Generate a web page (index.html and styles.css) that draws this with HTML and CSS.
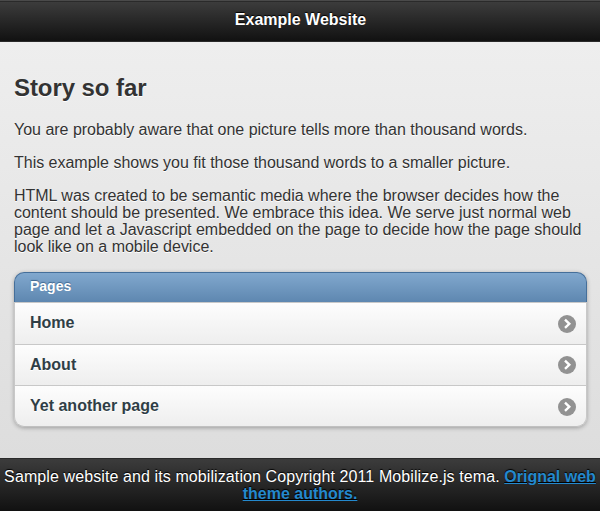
FILE: index.html
```html
<!DOCTYPE html>
<html lang="en">
<head>
<meta charset="utf-8">
<title>Example Website</title>
<link rel="stylesheet" href="styles.css">
</head>
<body>
<header class="header"><h1 class="title">Example Website</h1></header>
<main class="content">
  <h2 class="heading">Story so far</h2>
  <p class="p1">You are probably aware that one picture tells more than thousand words.</p>
  <p>This example shows you fit those thousand words to a smaller picture.</p>
  <p>HTML was created to be semantic media where the browser decides how the<br>content should be presented. We embrace this idea. We serve just normal web<br>page and let a Javascript embedded on the page to decide how the page should<br>look like on a mobile device.</p>
  <ul class="list">
    <li class="divider">Pages</li>
    <li class="item first"><a>Home</a><svg class="arrow" viewBox="0 0 18 18"><circle cx="9" cy="9" r="9"/><path d="M7 4.7 11.3 8.8 7 12.9"/></svg></li>
    <li class="item"><a>About</a><svg class="arrow" viewBox="0 0 18 18"><circle cx="9" cy="9" r="9"/><path d="M7 4.7 11.3 8.8 7 12.9"/></svg></li>
    <li class="item last"><a>Yet another page</a><svg class="arrow" viewBox="0 0 18 18"><circle cx="9" cy="9" r="9"/><path d="M7 4.7 11.3 8.8 7 12.9"/></svg></li>
  </ul>
</main>
<footer class="footer">Sample website and its mobilization Copyright 2011 Mobilize.js tema. <a class="link">Orignal web<br>theme authors.</a></footer>
</body>
</html>
```
FILE: styles.css
```css
* { box-sizing: border-box; }
body {
  margin: 0;
  height: 511px;
  overflow: hidden;
  display: flex;
  flex-direction: column;
  font: 16px/17px "Liberation Sans", Arial, sans-serif;
  color: #333;
}
.header {
  height: 42px;
  flex: none;
  border-top: 1px solid #4a4a4a;
  border-bottom: 1px solid #2a2a2a;
  background: linear-gradient(#2a2a2a 1px, #3c3c3c 1px, #111);
  color: #fff;
  text-align: center;
  text-shadow: 0 -1px 1px #000;
}
.title { margin: 9px 0 0 1px; font-size: 16px; line-height: 20px; }
.content {
  height: 416px;
  flex: none;
  padding: 30px 13px 0 14px;
  background: linear-gradient(#eee, #ddd);
  text-shadow: 0 1px 0 #fff;
}
.heading { margin: 0; font-size: 24px; line-height: 32px; letter-spacing: -.07px; }
p { margin: 0 0 16px; white-space: nowrap; letter-spacing: -.014px; }
.p1 { margin-top: 17px; }
.list {
  list-style: none;
  margin: 17px 0 0;
  padding: 0;
  height: 155px;
  border-radius: 10px;
  box-shadow: 0 1px 4px rgba(0, 0, 0, .3);
  font-weight: bold;
}
.divider {
  height: 30px;
  padding: 5px 15px 0;
  border: 1px solid #456f9a;
  border-bottom: 0;
  border-radius: 10px 10px 0 0;
  background: linear-gradient(#81a8ce, #5e87b0);
  color: #fff;
  font-size: 14px;
  text-shadow: 0 -1px 1px #3e6790;
}
.item {
  height: 41px;
  display: flex;
  align-items: center;
  justify-content: space-between;
  padding: 0 10px 0 15px;
  border: 1px solid #c8c8c8;
  border-bottom: 0;
  background: linear-gradient(#fdfdfd, #eee);
  color: #2f3e46;
}
.item a { padding-bottom: 2px; }
.first { height: 42px; }
.last { height: 42px; border-bottom: 1px solid #c0c0c0; border-radius: 0 0 10px 10px; }
.last .arrow { margin-top: 2px; }
.arrow { width: 18px; height: 18px; flex: none; }
.arrow circle { fill: #929292; }
.arrow path { fill: none; stroke: #fff; stroke-width: 2.4; }
.footer {
  height: 53px;
  flex: none;
  padding-top: 9px;
  border-top: 1px solid #2a2a2a;
  background: linear-gradient(#3c3c3c, #111);
  color: #fff;
  text-align: center;
  white-space: nowrap;
  text-shadow: 0 -1px 1px #000;
  letter-spacing: .1px;
}
.link { color: #2489ce; font-weight: bold; text-decoration: underline; letter-spacing: 0; }
```
